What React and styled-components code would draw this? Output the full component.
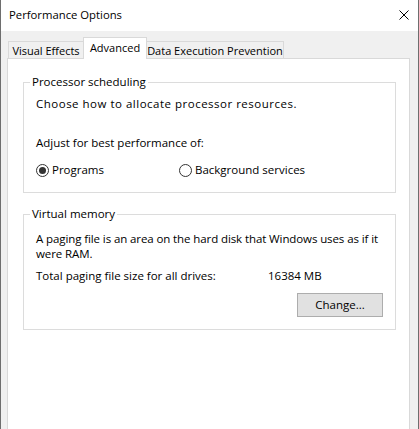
import React from "react";
import styled, { createGlobalStyle } from "styled-components";

const GlobalStyle = createGlobalStyle`
  html, body { margin: 0; padding: 0; background: #ffffff; }
  * { box-sizing: border-box; }
  body {
    font-family: "Open Sans", "Noto Sans", "Liberation Sans", sans-serif;
    font-size: 11px;
    color: #000;
  }
`;

const Window = styled.div`
  width: 419px;
  height: 429px;
  border-left: 1px solid #6e6e6e;
  border-right: 1px solid #6e6e6e;
  background: #f0f0f0;
  display: flex;
  flex-direction: column;
  overflow: hidden;
`;

const TitleBar = styled.div`
  height: 31px;
  flex: none;
  background: #ffffff;
  display: flex;
  align-items: center;
  justify-content: space-between;
  padding: 0 9px 1px 8px;
`;

const Title = styled.span`
  font-size: 11.3px;
  line-height: 16px;
`;

const CloseButton = styled.button`
  border: none;
  background: none;
  padding: 0;
  width: 10px;
  height: 10px;
  display: flex;
`;

const Body = styled.div`
  flex: 1;
  display: flex;
  flex-direction: column;
  padding: 6px 8px 0 6px;
`;

const TabRow = styled.div`
  display: flex;
  align-items: flex-end;
  height: 21px;
  padding-left: 1px;
  position: relative;
  z-index: 1;
`;

const Tab = styled.div`
  width: ${(p) => p.$w}px;
  margin-left: ${(p) => (p.$first ? 0 : -1)}px;
  height: ${(p) => (p.$active ? 22 : 17)}px;
  margin-bottom: ${(p) => (p.$active ? -1 : 0)}px;
  background: ${(p) => (p.$active ? "#ffffff" : "#f0f0f0")};
  border: 1px solid #d9d9d9;
  border-bottom: none;
  display: flex;
  align-items: center;
  justify-content: center;
  padding-top: ${(p) => (p.$active ? 0 : 1)}px;
  padding-bottom: ${(p) => (p.$active ? 3 : 0)}px;
  position: relative;
  z-index: ${(p) => (p.$active ? 2 : 1)};
  line-height: 15px;
  white-space: nowrap;
`;

const Panel = styled.div`
  flex: 1;
  background: #ffffff;
  border: 1px solid #d9d9d9;
  border-bottom: none;
  padding: 15px 13px 0 15px;
  display: flex;
  flex-direction: column;
`;

const Group = styled.fieldset`
  margin: ${(p) => (p.$spaced ? "13px" : "0")} 0 0 0;
  border: 1px solid #dcdcdc;
  padding: 0 12px ${(p) => p.$pb}px 12px;
  min-width: 0;
  display: flex;
  flex-direction: column;
`;

const Legend = styled.legend`
  padding: 0 2px;
  margin-left: -6px;
  line-height: 16px;
  font-size: 11.5px;
`;

const Text = styled.div`
  line-height: ${(p) => p.$lh || 16}px;
  margin-top: ${(p) => p.$mt || 0}px;
  font-size: 11.5px;
  letter-spacing: ${(p) => p.$ls || 0}px;
  white-space: nowrap;
`;

const RadioRow = styled.div`
  display: grid;
  grid-template-columns: 143px auto;
  margin-top: 11px;
  height: 16px;
  align-items: center;
`;

const RadioLabel = styled.label`
  display: flex;
  align-items: center;
  gap: 3px;
  font-size: 11.5px;
  line-height: 16px;
`;

const RadioCircle = styled.span`
  width: 13px;
  height: 13px;
  border-radius: 50%;
  border: 1px solid #333333;
  background: #ffffff;
  display: flex;
  align-items: center;
  justify-content: center;
  flex: none;
  &::after {
    content: "";
    width: 7px;
    height: 7px;
    border-radius: 50%;
    background: ${(p) => (p.$checked ? "#333333" : "transparent")};
  }
`;

const InfoRow = styled.div`
  display: grid;
  grid-template-columns: 232px auto;
  line-height: 16px;
  margin-top: 7px;
  font-size: 11.5px;
`;

const ButtonRow = styled.div`
  display: flex;
  justify-content: flex-end;
  margin-top: 9px;
`;

const Button = styled.button`
  width: 86px;
  height: 24px;
  background: #e1e1e1;
  border: 1px solid #adadad;
  font-family: inherit;
  font-size: 11.5px;
  color: #000;
  padding: 0 0 1px 0;
`;

export default function App() {
  return (
    <>
      <GlobalStyle />
      <Window>
        <TitleBar>
          <Title>Performance Options</Title>
          <CloseButton aria-label="Close">
            <svg width="10" height="10" viewBox="0 0 10 10">
              <path d="M0.5 0.5 L9.5 9.5 M9.5 0.5 L0.5 9.5" stroke="#000" strokeWidth="1" fill="none" />
            </svg>
          </CloseButton>
        </TitleBar>
        <Body>
          <TabRow>
            <Tab $w={76} $first>Visual Effects</Tab>
            <Tab $w={64} $active>Advanced</Tab>
            <Tab $w={138}>Data Execution Prevention</Tab>
          </TabRow>
          <Panel>
            <Group $pb={14}>
              <Legend>Processor scheduling</Legend>
              <Text $mt={6} $ls={0.5}>Choose how to allocate processor resources.</Text>
              <Text $mt={23}>Adjust for best performance of:</Text>
              <RadioRow>
                <RadioLabel>
                  <RadioCircle $checked />
                  Programs
                </RadioLabel>
                <RadioLabel>
                  <RadioCircle />
                  Background services
                </RadioLabel>
              </RadioRow>
            </Group>
            <Group $spaced $pb={12}>
              <Legend>Virtual memory</Legend>
              <Text $mt={9} $lh={15} $ls={-0.1}>
                A paging file is an area on the hard disk that Windows uses as if it
                <br />
                were RAM.
              </Text>
              <InfoRow>
                <span>Total paging file size for all drives:</span>
                <span>16384 MB</span>
              </InfoRow>
              <ButtonRow>
                <Button>Change...</Button>
              </ButtonRow>
            </Group>
          </Panel>
        </Body>
      </Window>
    </>
  );
}
